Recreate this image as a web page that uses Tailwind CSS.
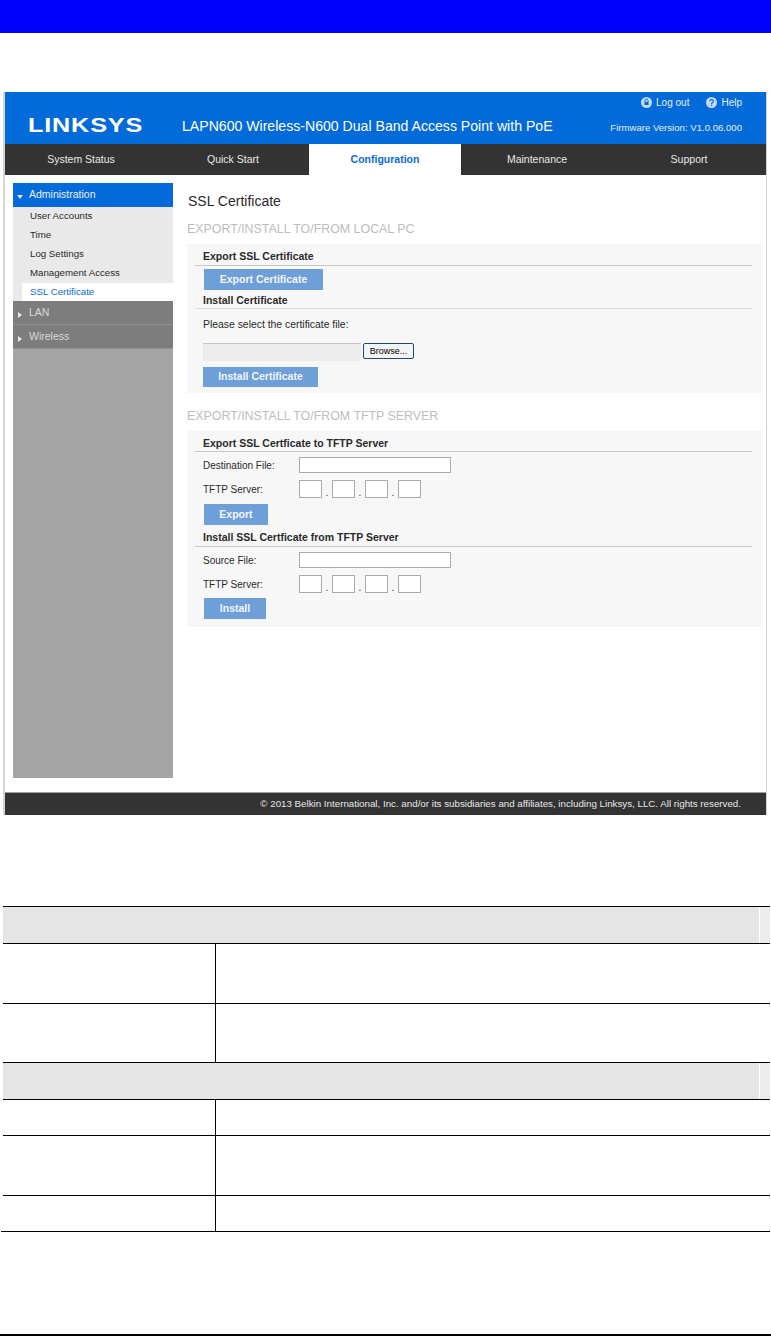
<!DOCTYPE html>
<html><head><meta charset="utf-8"><title>SSL Certificate</title>
<script src="https://cdn.jsdelivr.net/npm/@tailwindcss/browser@4"></script></head>
<body class="bg-white m-0 w-[771px] h-[1336px] overflow-hidden flex flex-col font-['Liberation_Sans',Arial,sans-serif] text-[#2a2a2a]">
<div class="h-[33px] bg-[#0000ff] shrink-0"></div>
<div class="h-[59px] shrink-0"></div>
<div class="ml-[3px] w-[764px] h-[723px] shrink-0 border-l-2 border-r border-[#d8d4c8] flex flex-col">
  <header class="h-[52px] bg-[#036ad9] text-white">
    <div class="flex justify-end items-center gap-[17px] pr-[24px] h-[20px] text-[10px] text-[#e6eefa]">
      <span class="flex items-center gap-[4px]"><svg width="11" height="11" viewBox="0 0 11 11"><circle cx="5.5" cy="5.5" r="5.5" fill="#c5d9f2"/><rect x="3.5" y="5" width="4" height="3" fill="#036ad9"/><path d="M4 5V3.5a1.5 1.5 0 0 1 3 0V5" fill="none" stroke="#036ad9"/></svg>Log out</span>
      <span class="flex items-center gap-[4px]"><svg width="11" height="11" viewBox="0 0 11 11"><circle cx="5.5" cy="5.5" r="5.5" fill="#c5d9f2"/><path d="M3.8 4.2a1.8 1.6 0 1 1 2.6 1.5c-.6.4-.9.6-.9 1.2" fill="none" stroke="#036ad9" stroke-width="1.2"/><rect x="4.9" y="7.6" width="1.2" height="1.2" fill="#036ad9"/></svg>Help</span>
    </div>
    <div class="flex items-center h-[32px]">
      <span class="ml-[23px] w-[134px] pb-[8px] text-[21px] leading-none font-bold tracking-[0.7px] whitespace-nowrap scale-x-[1.2] origin-left">LINKSYS</span>
      <span class="ml-[20px] pb-[2px] text-[14.1px] whitespace-nowrap">LAPN600 Wireless-N600 Dual Band Access Point with PoE</span>
      <span class="ml-auto mr-[24px] text-[9.6px] whitespace-nowrap text-[#e6eefa]">Firmware Version: V1.0.06.000</span>
    </div>
  </header>
  <nav class="h-[31px] bg-[#333333] flex text-[10.5px] text-[#e8e8e8]">
    <a class="w-[152px] flex items-center justify-center">System Status</a>
    <a class="w-[152px] flex items-center justify-center">Quick Start</a>
    <a class="w-[152px] flex items-center justify-center bg-white text-[#0a6ad8] font-bold">Configuration</a>
    <a class="w-[152px] flex items-center justify-center">Maintenance</a>
    <a class="w-[152px] flex items-center justify-center">Support</a>
  </nav>
  <div class="flex h-[618px] border-b border-[#a0a0a0]">
    <aside class="ml-[8px] mt-[8px] w-[160px] h-[595px] bg-[#a5a5a5] shrink-0 text-[9.7px]">
      <div class="h-[24px] pb-[1px] bg-[#036ad9] text-[#eaf1fb] text-[10.5px] flex items-center"><svg class="ml-[4px] mr-[6px] mt-[4px]" width="6" height="4" viewBox="0 0 6 4"><path d="M0 0h6L3 4z" fill="#dbe7f5"/></svg>Administration</div>
      <div class="bg-[#e9e9e9] h-[94px] flex flex-col">
        <div class="h-[19px] pl-[17px] flex items-center">User Accounts</div>
        <div class="h-[19px] pl-[17px] flex items-center">Time</div>
        <div class="h-[19px] pl-[17px] flex items-center">Log Settings</div>
        <div class="h-[19px] pl-[17px] flex items-center">Management Access</div>
        <div class="h-[18px] ml-[9px] pl-[8px] flex items-center bg-white text-[#0a6ad8]">SSL Certificate</div>
      </div>
      <div class="h-[24px] bg-[#7d7d7d] border-b border-[#909090] text-[#d8d8d8] text-[10.5px] flex items-center"><svg class="ml-[5px] mr-[7px] mt-[4px]" width="4" height="6" viewBox="0 0 4 6"><path d="M0 0l4 3-4 3z" fill="#e8e8e8"/></svg>LAN</div>
      <div class="h-[24px] bg-[#7d7d7d] border-b border-[#909090] text-[#d8d8d8] text-[10.5px] flex items-center"><svg class="ml-[5px] mr-[7px] mt-[4px]" width="4" height="6" viewBox="0 0 4 6"><path d="M0 0l4 3-4 3z" fill="#e8e8e8"/></svg>Wireless</div>
    </aside>
    <main class="ml-[14px] mr-[3px] flex-1 min-w-0 text-[10px]">
      <h1 class="mt-[18px] ml-[1px] text-[14px] leading-[16px] font-normal">SSL Certificate</h1>
      <h2 class="mt-[13px] text-[12.4px] leading-[14px] text-[#bdbdbd] font-normal whitespace-nowrap">EXPORT/INSTALL TO/FROM LOCAL PC</h2>
      <section class="mt-[8px] h-[149px] bg-[#f7f7f7] pl-[8px] pr-[11px]">
        <div class="pt-[5px] pl-[8px] h-[22px] border-b border-[#c8c8c8] text-[10.5px] font-bold leading-[14px]">Export SSL Certificate</div>
        <button class="block mt-[3px] ml-[9px] w-[119px] h-[21px] bg-[#6f9fd8] text-[#f2f6fb] font-bold text-[10.5px]">Export Certificate</button>
        <div class="mt-[3px] pl-[8px] h-[16px] border-b border-[#dcdcdc] text-[10.5px] font-bold leading-[14px]">Install Certificate</div>
        <p class="mt-[9px] pl-[8px] text-[10.4px] leading-[14px]">Please select the certificate file:</p>
        <div class="mt-[11px] ml-[8px] flex items-start gap-[2px]">
          <div class="w-[158px] h-[18px] bg-[#ececec] border-t border-[#c4c4c4]"></div>
          <button class="w-[51px] h-[16px] bg-[#f4f4f4] border border-[#1c4a7a] rounded-[2px] text-[9px] text-black leading-none">Browse...</button>
        </div>
        <button class="block mt-[6px] ml-[8px] w-[115px] h-[20px] bg-[#6f9fd8] text-[#f2f6fb] font-bold text-[10.5px]">Install Certificate</button>
      </section>
      <h2 class="mt-[16px] text-[12.4px] leading-[14px] text-[#bdbdbd] font-normal whitespace-nowrap">EXPORT/INSTALL TO/FROM TFTP SERVER</h2>
      <section class="mt-[7px] h-[197px] bg-[#f7f7f7] pl-[8px] pr-[11px] text-[10px]">
        <div class="pt-[6px] pl-[8px] h-[22px] border-b border-[#c8c8c8] text-[10.5px] font-bold leading-[14px]">Export SSL Certficate to TFTP Server</div>
        <div class="mt-[5px] flex items-center h-[16px] pl-[8px]"><span class="w-[96px]">Destination File:</span><div class="w-[152px] h-[16px] bg-white border border-[#aaa]"></div></div>
        <div class="mt-[7px] flex items-center h-[18px] pl-[8px]"><span class="w-[96px]">TFTP Server:</span>
          <div class="flex items-end">
            <div class="w-[23px] h-[18px] bg-white border border-[#aaa]"></div><span class="w-[10px] text-center leading-[10px]">.</span>
            <div class="w-[23px] h-[18px] bg-white border border-[#aaa]"></div><span class="w-[10px] text-center leading-[10px]">.</span>
            <div class="w-[23px] h-[18px] bg-white border border-[#aaa]"></div><span class="w-[10px] text-center leading-[10px]">.</span>
            <div class="w-[23px] h-[18px] bg-white border border-[#aaa]"></div>
          </div>
        </div>
        <button class="block mt-[6px] ml-[9px] w-[64px] h-[21px] bg-[#6f9fd8] text-[#f2f6fb] font-bold text-[10.5px]">Export</button>
        <div class="mt-[5px] pl-[8px] h-[17px] border-b border-[#c8c8c8] text-[10.5px] font-bold leading-[14px]">Install SSL Certficate from TFTP Server</div>
        <div class="mt-[5px] flex items-center h-[16px] pl-[8px]"><span class="w-[96px]">Source File:</span><div class="w-[152px] h-[16px] bg-white border border-[#aaa]"></div></div>
        <div class="mt-[7px] flex items-center h-[18px] pl-[8px]"><span class="w-[96px]">TFTP Server:</span>
          <div class="flex items-end">
            <div class="w-[23px] h-[18px] bg-white border border-[#aaa]"></div><span class="w-[10px] text-center leading-[10px]">.</span>
            <div class="w-[23px] h-[18px] bg-white border border-[#aaa]"></div><span class="w-[10px] text-center leading-[10px]">.</span>
            <div class="w-[23px] h-[18px] bg-white border border-[#aaa]"></div><span class="w-[10px] text-center leading-[10px]">.</span>
            <div class="w-[23px] h-[18px] bg-white border border-[#aaa]"></div>
          </div>
        </div>
        <button class="block mt-[5px] ml-[9px] w-[62px] h-[21px] bg-[#6f9fd8] text-[#f2f6fb] font-bold text-[10.5px]">Install</button>
      </section>
    </main>
  </div>
  <footer class="h-[22px] bg-[#333333] text-[#e8e8e8] text-[9.75px] flex items-center justify-end pr-[25px] whitespace-nowrap">© 2013 Belkin International, Inc. and/or its subsidiaries and affiliates, including Linksys, LLC. All rights reserved.</footer>
</div>
<div class="h-[91px] shrink-0"></div>
<div class="ml-[3px] w-[767px] shrink-0 border-t border-black">
  <div class="h-[36px] bg-[#e5e5e5] flex justify-end"><div class="w-[11px] bg-[#ececec] border-l border-white"></div></div>
  <div class="h-[60px] border-t border-black flex"><div class="w-[213px] border-r border-black"></div></div>
  <div class="h-[59px] border-t border-black flex"><div class="w-[213px] border-r border-black"></div></div>
  <div class="h-[37px] bg-[#e5e5e5] border-t border-black flex justify-end"><div class="w-[11px] bg-[#ececec] border-l border-white"></div></div>
  <div class="h-[36px] border-t border-black flex"><div class="w-[213px] border-r border-black"></div></div>
  <div class="h-[60px] border-t border-black flex"><div class="w-[213px] border-r border-black"></div></div>
  <div class="h-[36px] border-t border-black flex"><div class="w-[213px] border-r border-black"></div></div>
  <div class="-ml-[2px] border-t border-black"></div>
</div>
<div class="flex-1"></div>
<div class="h-[2px] bg-black shrink-0"></div>
</body></html>
